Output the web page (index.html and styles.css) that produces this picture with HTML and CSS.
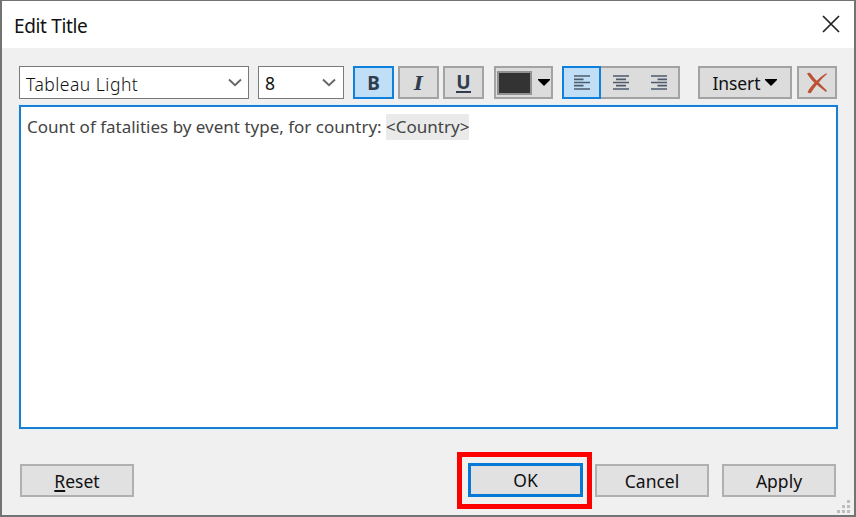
FILE: index.html
```
<!DOCTYPE html>
<html lang="en">
<head>
<meta charset="utf-8">
<title>Edit Title</title>
<link rel="stylesheet" href="styles.css">
</head>
<body>
<div class="dialog">
  <header class="titlebar">
    <h1>Edit Title</h1>
    <svg class="close" width="18" height="18" viewBox="0 0 18 18"><path d="M1 1L17 17M17 1L1 17"/></svg>
  </header>
  <div class="toolbar">
    <div class="combo font"><span class="light">Tableau Light</span><svg width="14" height="9" viewBox="0 0 14 9"><path d="M1 1.5L7 7.2L13 1.5"/></svg></div>
    <div class="combo size"><span>8</span><svg width="14" height="9" viewBox="0 0 14 9"><path d="M1 1.5L7 7.2L13 1.5"/></svg></div>
    <button class="tool bold active">B</button>
    <button class="tool italic">I</button>
    <button class="tool underline"><span>U</span></button>
    <button class="tool color"><span class="swatch"></span><svg width="12" height="7" viewBox="0 0 12 7"><path d="M0 0H12V1L6 7L0 1Z"/></svg></button>
    <div class="align">
      <button class="seg active"><svg width="16" height="15" viewBox="0 0 16 15"><path d="M0 1H16M0 4.3H9.5M0 7.5H16M0 10.7H9.5M0 14H16"/></svg></button>
      <button class="seg"><svg width="16" height="15" viewBox="0 0 16 15"><path d="M0 1H16M3 4.3H13M0 7.5H16M3 10.7H13M0 14H16"/></svg></button>
      <button class="seg"><svg width="16" height="15" viewBox="0 0 16 15"><path d="M0 1H16M6.5 4.3H16M0 7.5H16M6.5 10.7H16M0 14H16"/></svg></button>
    </div>
    <button class="tool insert"><span>Insert</span><svg width="12" height="7" viewBox="0 0 12 7"><path d="M0 0H12V1L6 7L0 1Z"/></svg></button>
    <button class="tool clear"><svg width="22" height="22" viewBox="0 0 22 22"><path d="M1 1.6C2.2.2 4.2.5 5.3 2.2C7.2 5 9 7 10.9 8.7C13.8 5.8 17 3 20.3 1.2L21 2C18 4.5 15.2 7.4 12.7 10.4C15.2 13.1 18 15.8 21 18.8L20 20C16.7 17.5 13.7 15 10.8 12.7C8.8 15.2 6.8 17.8 5.2 20.5C4.1 21.6 2 21.3 1.6 20C3.3 16.8 5.8 13.7 8.5 10.8C5.8 8.2 3 5.1 1 1.6Z"/></svg></button>
  </div>
  <main class="editor"><span class="copy">Count of fatalities by event type, for country: </span><span class="field">&lt;Country&gt;</span></main>
  <footer class="actions">
    <button class="btn reset"><span><u>R</u>eset</span></button>
    <div class="highlight"><button class="btn ok"><span>OK</span></button></div>
    <button class="btn cancel"><span>Cancel</span></button>
    <button class="btn apply"><span>Apply</span></button>
  </footer>
  <svg class="grip" width="13" height="13" viewBox="0 0 13 13"><path d="M10 0h3v3h-3zM5 5h3v3h-3zM10 5h3v3h-3zM0 10h3v3h-3zM5 10h3v3h-3zM10 10h3v3h-3z"/></svg>
</div>
</body>
</html>
```
FILE: styles.css
```
* { box-sizing: border-box; }
body { margin: 0; overflow: hidden; font-family: "Noto Sans", "Open Sans", sans-serif; color: #111; }
button { padding: 0; margin: 0; font: inherit; color: inherit; border-radius: 0; }
svg { display: block; flex: none; }
.dialog {
  position: relative; width: 856px; height: 517px; background: #f0f0f0;
  border: 2px solid #737373; border-top-width: 1px; border-bottom-width: 2px;
}
.titlebar {
  height: 47px; background: #fff; display: flex; align-items: center;
  justify-content: space-between; padding: 0 14px 0 12px;
}
h1 { margin: 3px 0 0; font-size: 19px; font-weight: 400; line-height: 26px; letter-spacing: -0.35px; }
.close { fill: none; stroke: #222; stroke-width: 1.7; margin-bottom: 1px; }
.toolbar { display: flex; height: 33px; margin: 18px 0 0 17px; }
.combo {
  height: 33px; border: 1.5px solid #7a7a7a; background: #fff; display: flex;
  align-items: center; justify-content: space-between; padding: 0 6px; font-size: 17.5px;
}
.combo svg { fill: none; stroke: #666; stroke-width: 1.9; }
.font { width: 230px; margin-right: 9px; }
.size { width: 86px; margin-right: 9px; padding-right: 7px; }
.light { font-weight: 300; letter-spacing: 0.5px; padding-top: 3px; }
.tool { height: 33px; border: 2px solid #a3a3a3; background: #dcdcdc; display: flex; align-items: center; justify-content: center; }
.bold, .italic, .underline { width: 41px; color: #2f3d4e; font-size: 19px; font-weight: 700; }
.bold { font-family: "Noto Sans", sans-serif; margin-right: 4px; }
.italic { font-family: "DejaVu Serif", serif; font-style: italic; margin-right: 4px; }
.underline { margin-right: 10px; }
.underline span { line-height: 18px; height: 20px; border-bottom: 2px solid #2f3d4e; }
.tool.active, .seg.active { background: #c0def5; border: 2px solid #0f80dc; }
.color { width: 59px; margin-right: 9px; gap: 6px; }
.swatch { width: 35px; height: 24px; border: 2px solid #929292; background: #333; }
.align { width: 118px; display: flex; border: 2px solid #a3a3a3; background: #dcdcdc; margin-right: 18px; }
.seg { width: 39px; border: 0; background: none; display: flex; align-items: center; justify-content: center; }
.seg.active { margin: -2px 0 -2px -2px; width: 40px; }
.seg svg { stroke: #4e5b6c; stroke-width: 1.7; }
.insert { width: 94px; margin-right: 5px; gap: 5px; font-size: 17.5px; letter-spacing: -0.1px; }
.clear { width: 40px; }
.clear svg { fill: #bd5133; }
.editor {
  width: 819px; height: 324px; margin: 6px 0 0 17px; background: #fff; border: 2px solid #187fd2;
  padding: 7px 6px; font-size: 17px; line-height: 26px; color: #444; white-space: pre;
  box-shadow: 0 0 0 1px #e0eef8;
}
.field { display: inline-block; background: #eaeaea; }
.actions { display: flex; margin: 23px 0 0 18px; }
.btn {
  width: 114px; height: 33px; border: 2px solid #b0b0b0; background: #e1e1e1;
  font-size: 17.5px; margin-top: 12px;
}
.btn u { text-decoration-thickness: 1.5px; text-underline-offset: 2px; }
.highlight { width: 135px; height: 57px; border: 5px solid #f00; margin: 0 3px 0 323px; padding: 6px 6px 0 6px; }
.ok { width: 115px; height: 34px; margin: 0; border: 3px solid #0878d7; }
.cancel { margin-right: 13px; }
.grip { position: absolute; right: 4px; bottom: 2px; fill: #bdbdbd; }
```
